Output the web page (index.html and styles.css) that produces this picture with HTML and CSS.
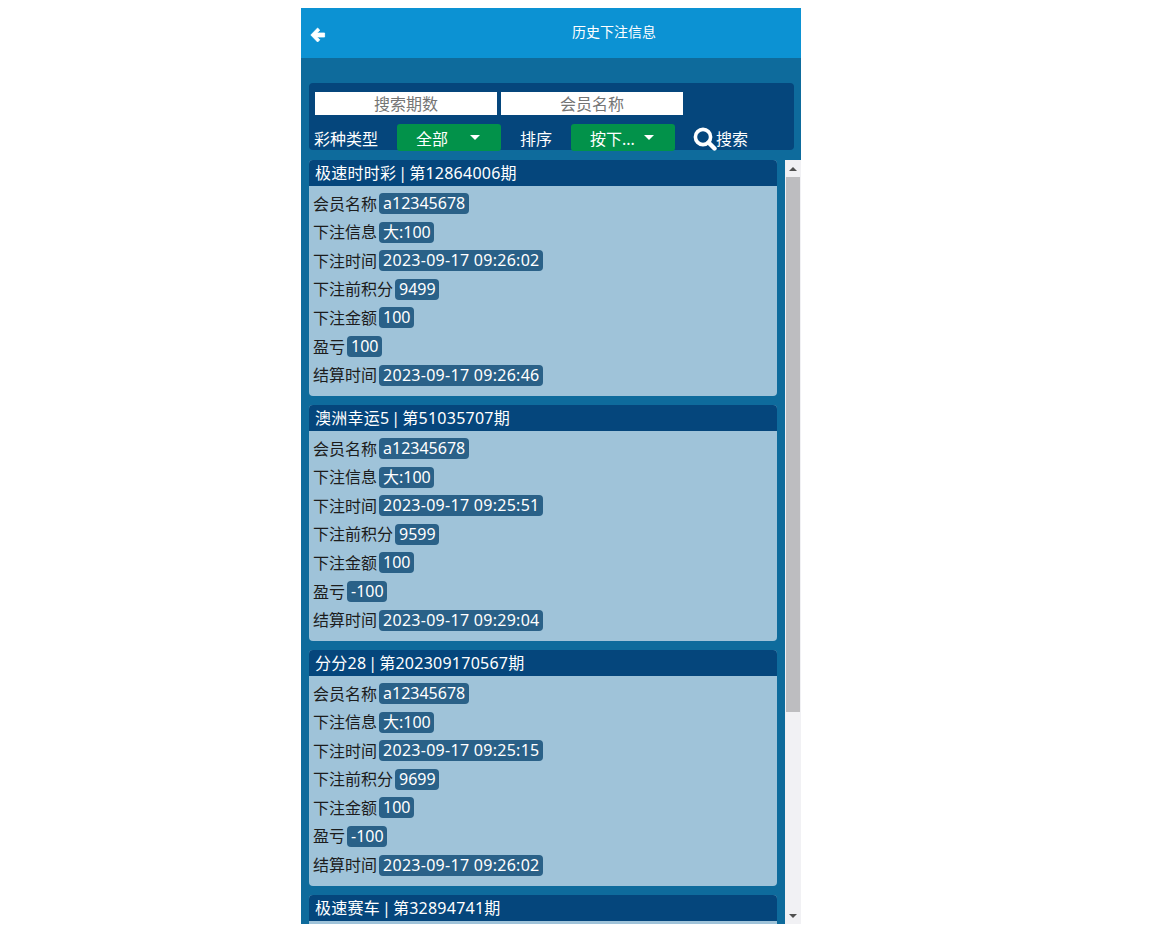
FILE: index.html
```html
<!DOCTYPE html>
<html lang="zh-CN">

<head>
    <meta charset="UTF-8">
    <title>历史下注信息</title>
    <link rel="stylesheet" href="styles.css">
</head>

<body>
    <div class="page">
        <div class="header">
            <svg class="back" viewBox="0 0 16 16" width="16" height="16">
                <path fill="#fff" stroke="#fff" stroke-width="0.8" stroke-linejoin="round" d="M7.6 1 9.8 3.2 6.8 6H14.6V10H6.8L9.8 12.8 7.6 15 0.8 8Z" />
            </svg>
            <div class="title">历史下注信息</div>
        </div>
        <div class="toolbar">
            <div class="panel">
                <div class="inputs">
                    <input type="text" class="input1" placeholder="搜索期数">
                    <input type="text" class="input1" placeholder="会员名称">
                </div>
                <div class="filters">
                    <span class="label">彩种类型</span>
                    <div class="select select-type">全部<i class="caret"></i></div>
                    <span class="label label-sort">排序</span>
                    <div class="select select-sort">按下...<i class="caret"></i></div>
                    <svg class="search-icon" viewBox="0 0 24 24" width="24" height="24">
                        <circle cx="10" cy="10" r="7.6" fill="none" stroke="#fff" stroke-width="3.6" />
                        <path d="M15.5 15.5 21.5 21.5" stroke="#fff" stroke-width="4.4" stroke-linecap="round" />
                    </svg>
                    <span class="label">搜索</span>
                </div>
            </div>
        </div>
        <div class="content">
            <div class="list">
                <div class="card">
                    <div class="card-title">极速时时彩 | 第12864006期</div>
                    <div class="card-body">
                        <div class="row">会员名称<span class="badge">a12345678</span></div>
                        <div class="row">下注信息<span class="badge">大:100</span></div>
                        <div class="row">下注时间<span class="badge badge-time">2023-09-17 09:26:02</span></div>
                        <div class="row">下注前积分<span class="badge">9499</span></div>
                        <div class="row">下注金额<span class="badge">100</span></div>
                        <div class="row">盈亏<span class="badge">100</span></div>
                        <div class="row">结算时间<span class="badge badge-time">2023-09-17 09:26:46</span></div>
                    </div>
                </div>
                <div class="card">
                    <div class="card-title">澳洲幸运5 | 第51035707期</div>
                    <div class="card-body">
                        <div class="row">会员名称<span class="badge">a12345678</span></div>
                        <div class="row">下注信息<span class="badge">大:100</span></div>
                        <div class="row">下注时间<span class="badge badge-time">2023-09-17 09:25:51</span></div>
                        <div class="row">下注前积分<span class="badge">9599</span></div>
                        <div class="row">下注金额<span class="badge">100</span></div>
                        <div class="row">盈亏<span class="badge">-100</span></div>
                        <div class="row">结算时间<span class="badge badge-time">2023-09-17 09:29:04</span></div>
                    </div>
                </div>
                <div class="card">
                    <div class="card-title">分分28 | 第202309170567期</div>
                    <div class="card-body">
                        <div class="row">会员名称<span class="badge">a12345678</span></div>
                        <div class="row">下注信息<span class="badge">大:100</span></div>
                        <div class="row">下注时间<span class="badge badge-time">2023-09-17 09:25:15</span></div>
                        <div class="row">下注前积分<span class="badge">9699</span></div>
                        <div class="row">下注金额<span class="badge">100</span></div>
                        <div class="row">盈亏<span class="badge">-100</span></div>
                        <div class="row">结算时间<span class="badge badge-time">2023-09-17 09:26:02</span></div>
                    </div>
                </div>
                <div class="card">
                    <div class="card-title">极速赛车 | 第32894741期</div>
                    <div class="card-body"></div>
                </div>
            </div>
            <div class="scrollbar">
                <div class="scroll-btn"><i class="arrow-up"></i></div>
                <div class="scroll-thumb"></div>
                <div class="scroll-space"></div>
                <div class="scroll-btn"><i class="arrow-down"></i></div>
            </div>
        </div>
    </div>
</body>

</html>
```

FILE: styles.css
```css
html,
body {
    overflow: hidden;
}

body {
    margin: 8px 0 0 301px;
    font-family: "Noto Sans", "Noto Sans CJK SC", sans-serif;
    font-size: 16px;
    background-color: #fff;
}

.page {
    display: flex;
    flex-direction: column;
    width: 500px;
    height: 916px;
    background-color: #0e6b9c;
}

.header {
    display: flex;
    align-items: center;
    flex: none;
    height: 50px;
    padding-left: 9px;
    background-color: #0c92d3;
    color: #fff;
}

.back {
    margin-top: 3px;
}

.title {
    margin-left: 246px;
    margin-bottom: 5px;
    font-size: 14px;
}

.toolbar {
    flex: none;
    height: 102px;
    padding: 25px 7px 0 8px;
    box-sizing: border-box;
}

.panel {
    height: 67px;
    padding: 9px 6px 0;
    box-sizing: border-box;
    border-radius: 4px;
    background-color: #05467c;
}

.inputs {
    display: flex;
    gap: 4px;
}

.input1 {
    width: 182px;
    height: 23px;
    padding: 0;
    border: none;
    box-sizing: border-box;
    background-color: #fff;
    font-family: inherit;
    font-size: 16px;
    text-align: center;
}

.input1::placeholder {
    color: #757575;
}

.filters {
    display: flex;
    align-items: center;
    height: 27px;
    margin-top: 9px;
    margin-left: -1px;
    color: #fff;
}

.label {
    white-space: nowrap;
}

.label-sort {
    margin: 0 19px;
}

.select {
    display: flex;
    align-items: center;
    width: 104px;
    height: 27px;
    box-sizing: border-box;
    border-radius: 3px;
    background-color: #02924a;
    color: #fff;
}

.select-type {
    margin-left: 19px;
    padding-left: 19px;
}

.select-sort {
    padding-left: 19px;
}

.caret {
    width: 0;
    height: 0;
    border-left: 5.5px solid transparent;
    border-right: 5.5px solid transparent;
    border-top: 5.5px solid #fff;
}

.select-type .caret {
    margin-left: 22px;
}

.select-sort .caret {
    margin-left: 9px;
}

.search-icon {
    margin-left: 18px;
    margin-right: -1px;
    margin-top: 2px;
}

.content {
    display: flex;
    flex: 1;
    min-height: 0;
}

.list {
    flex: 1;
    min-width: 0;
    padding: 0 8px;
    overflow: hidden;
}

.card {
    margin-bottom: 9px;
    border-radius: 4px;
    overflow: hidden;
    background-color: #9fc3d9;
}

.card-title {
    height: 26px;
    padding-left: 6px;
    line-height: 26px;
    letter-spacing: 0.25px;
    word-spacing: -2.5px;
    background-color: #05467c;
    color: #fff;
}

.card-body {
    padding: 2.3px 0 7.5px 4px;
    color: #1c1c1c;
}

.row {
    display: flex;
    align-items: center;
    gap: 2px;
    height: 28.6px;
    white-space: nowrap;
}

.badge {
    height: 21px;
    margin-top: 2px;
    padding: 0 3.5px 0 4px;
    border-radius: 4px;
    line-height: 21px;
    background-color: #2a6188;
    color: #fff;
}

.badge-time {
    letter-spacing: 0.28px;
}

.scrollbar {
    display: flex;
    flex-direction: column;
    flex: none;
    width: 16px;
    background-color: #f1f1f4;
}

.scroll-btn {
    display: flex;
    align-items: center;
    justify-content: center;
    flex: none;
    height: 17px;
}

.scroll-thumb {
    flex: none;
    height: 535px;
    margin: 0 1px;
    background-color: #bdbdc0;
}

.scroll-space {
    flex: 1;
}

.arrow-up,
.arrow-down {
    width: 0;
    height: 0;
    border-left: 4px solid transparent;
    border-right: 4px solid transparent;
}

.arrow-up {
    border-bottom: 4px solid #505050;
}

.arrow-down {
    border-top: 4px solid #505050;
}
```
